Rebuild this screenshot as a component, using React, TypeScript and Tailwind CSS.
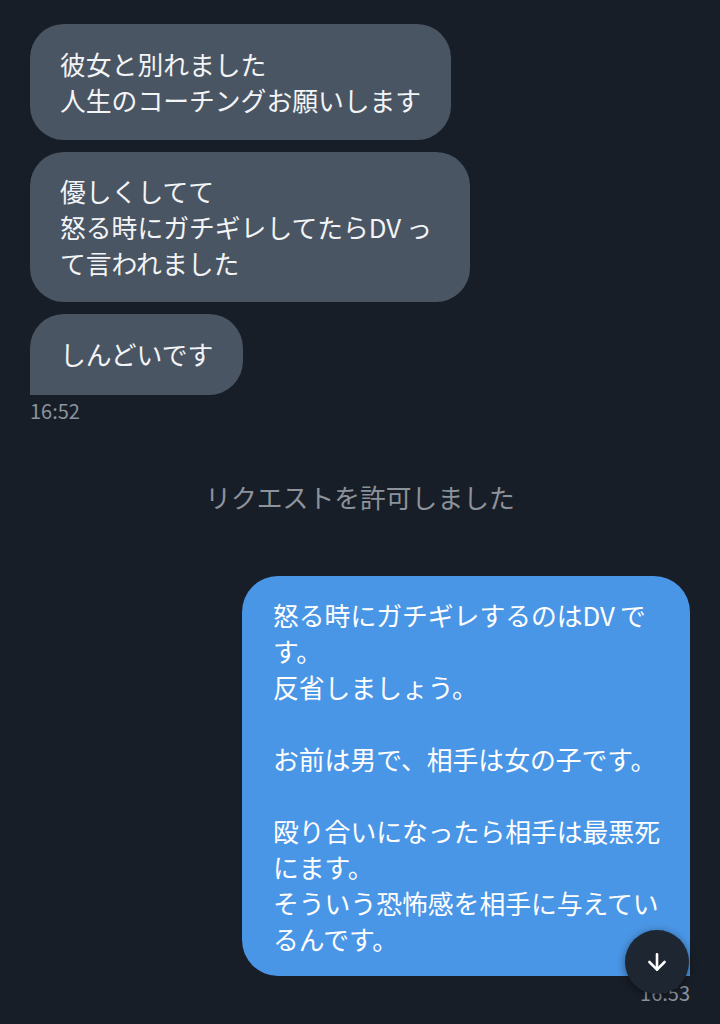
import { ArrowDown } from "lucide-react";

const font = { fontFamily: '"Noto Sans CJK JP", "Noto Sans", sans-serif' };

function Lines({ lines }: { lines: string[] }) {
  return (
    <>
      {lines.map((l, i) => (
        <div key={i} className="whitespace-nowrap h-[36px]">
          {l}
        </div>
      ))}
    </>
  );
}

export default function App() {
  return (
    <div
      className="relative w-[720px] h-[1024px] overflow-hidden bg-[#181e28] text-white"
      style={font}
    >
      <div className="flex flex-col px-[30px] pt-[24px] text-[25.8px] leading-[36px]">
        {/* incoming */}
        <div className="flex flex-col items-start gap-[12px]">
          <div className="bg-[#4a5563] rounded-[34px] pl-[30px] pr-[30px] py-[22px] text-[#f2f4f6]">
            <Lines lines={["彼女と別れました", "人生のコーチングお願いします"]} />
          </div>
          <div className="w-[440px] bg-[#4a5563] rounded-[34px] pl-[30px] pr-[30px] py-[21px] text-[#f2f4f6]">
            <Lines lines={["優しくしてて", "怒る時にガチギレしてたらDV\u2009っ", "て言われました"]} />
          </div>
          <div className="bg-[#4a5563] rounded-[34px] rounded-bl-none pl-[30px] pr-[30px] py-[22px] h-[81px] text-[#f2f4f6]">
            <Lines lines={["しんどいです"]} />
          </div>
        </div>
        <div className="mt-[4px] text-[20px] leading-[24px] text-[#8b939d]">16:52</div>

        {/* system */}
        <div className="mt-[56px] text-center text-[#8d939b] h-[36px]">
          リクエストを許可しました
        </div>

        {/* outgoing */}
        <div className="mt-[61px] flex flex-col items-end">
          <div className="w-[448px] bg-[#4a96e6] rounded-[36px] rounded-br-none pl-[31px] pr-[20px] pt-[21px] pb-[19px] text-white">
            <Lines
              lines={[
                "怒る時にガチギレするのはDV\u2009で",
                "す。",
                "反省しましょう。",
                "",
                "お前は男で、相手は女の子です。",
                "",
                "殴り合いになったら相手は最悪死",
                "にます。",
                "そういう恐怖感を相手に与えてい",
                "るんです。",
              ]}
            />
          </div>
          <div className="mt-[5px] text-[20px] leading-[24px] text-[#8b939d]">16:53</div>
        </div>
      </div>

      {/* scroll to bottom */}
      <div className="absolute left-[625px] top-[930px] w-[64px] h-[64px] rounded-full bg-[#1e2632] shadow-[0_2px_8px_rgba(0,0,0,0.45)] flex items-center justify-center">
        <ArrowDown size={26} strokeWidth={2.4} color="#ffffff" />
      </div>
    </div>
  );
}
